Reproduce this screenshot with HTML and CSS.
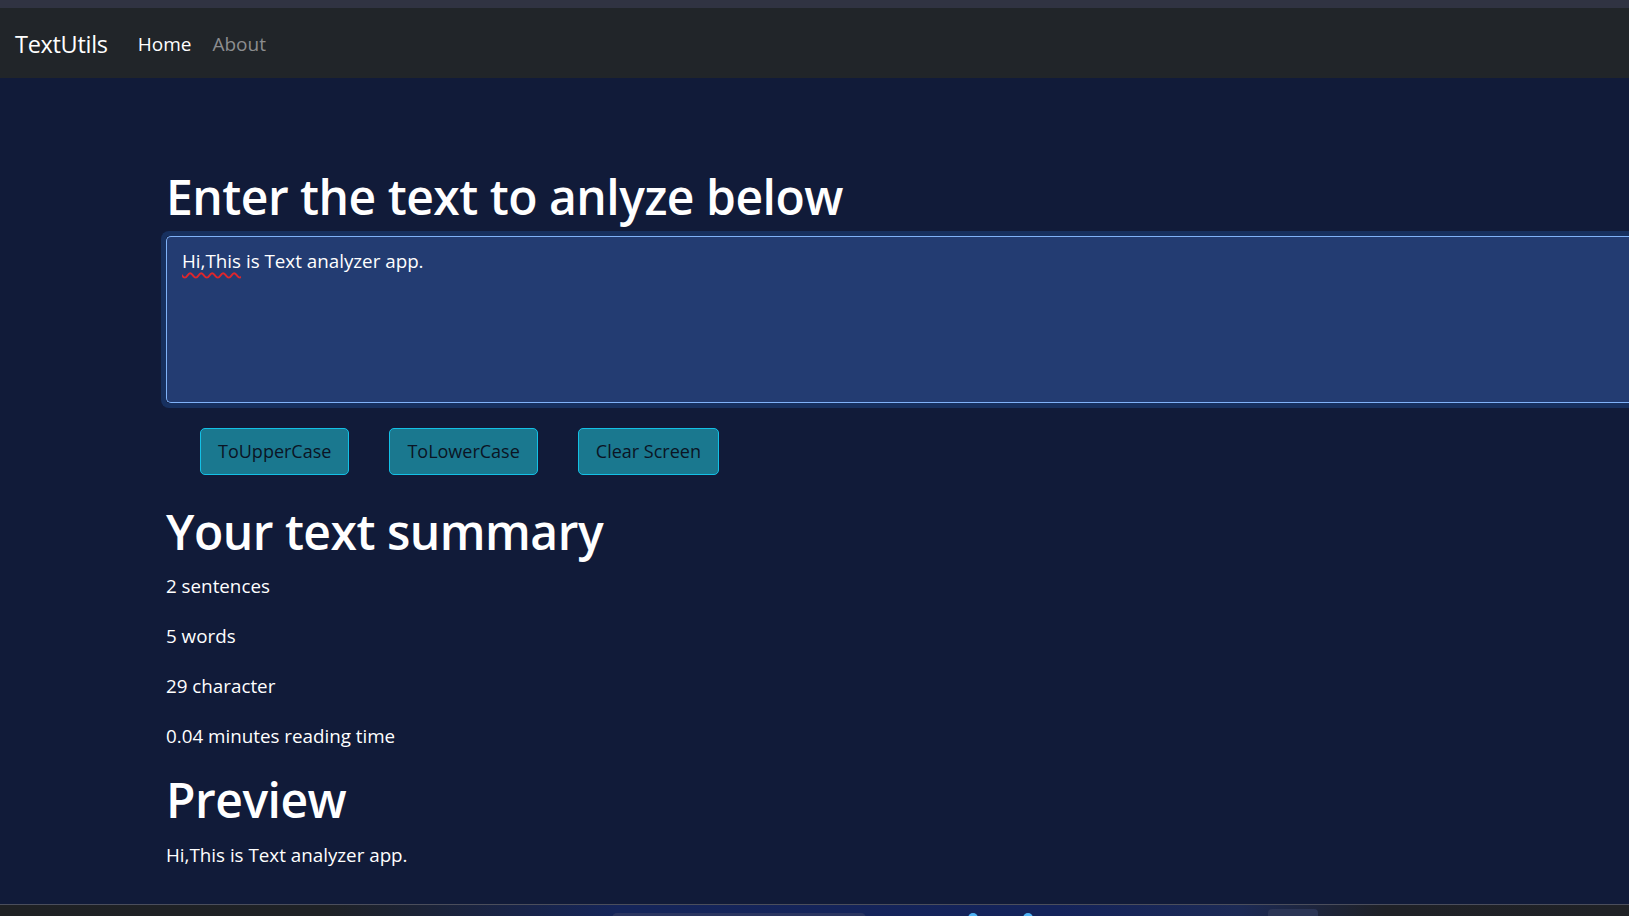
FILE: index.html
```html
<!DOCTYPE html>
<html lang="en">
<head>
<meta charset="utf-8">
<title>TextUtils</title>
<link rel="stylesheet" href="styles.css">
</head>
<body>
<div class="topstrip"></div>
<nav class="navbar">
  <a class="brand" href="#">TextUtils</a>
  <ul class="nav-links">
    <li><a class="nav-link active" href="#">Home</a></li>
    <li><a class="nav-link" href="#">About</a></li>
  </ul>
</nav>
<main class="container">
  <h1 class="title first">Enter the text to anlyze below</h1>
  <div class="textbox-wrap">
    <div class="textbox"><span class="misspelled">Hi,This</span> is Text analyzer app.</div>
  </div>
  <div class="buttons">
    <button class="btn">ToUpperCase</button>
    <button class="btn">ToLowerCase</button>
    <button class="btn">Clear Screen</button>
  </div>
  <h1 class="title">Your text summary</h1>
  <p class="line">2 sentences</p>
  <p class="line">5 words</p>
  <p class="line">29 character</p>
  <p class="line">0.04 minutes reading time</p>
  <h1 class="title">Preview</h1>
  <p class="line">Hi,This is Text analyzer app.</p>
</main>
<div class="taskbar">
  <div class="search-pill"></div>
  <span class="dot dot-a"></span>
  <span class="dot dot-b"></span>
  <div class="tray-pill"></div>
</div>
</body>
</html>
```

FILE: styles.css
```css
html, body {
  margin: 0;
  padding: 0;
  overflow: hidden;
  height: 100%;
}
body {
  background: #111b39;
  color: #ffffff;
  font-family: "Open Sans", "Noto Sans", sans-serif;
  font-size: 18.8px;
}
.topstrip {
  height: 8px;
  background: #303342;
}
.navbar {
  height: 70px;
  background: #212529;
  display: flex;
  align-items: center;
  padding-left: 15px;
  padding-top: 2px;
  box-sizing: border-box;
}
.brand {
  color: #ffffff;
  text-decoration: none;
  font-size: 23.5px;
  margin-right: 30px;
  letter-spacing: -0.3px;
}
.nav-links {
  list-style: none;
  display: flex;
  gap: 21px;
  margin: 0;
  padding: 0;
}
.nav-link {
  color: #8c8d8f;
  text-decoration: none;
  font-size: 19px;
}
.nav-link.active {
  color: #ffffff;
}
.container {
  padding-left: 166px;
  padding-top: 89px;
}
.title {
  font-size: 48px;
  font-weight: 600;
  line-height: 1.2;
  margin: 1px 0 11px 0;
  letter-spacing: -0.5px;
}
.title.first {
  margin-bottom: 5px;
}
.textbox-wrap {
  margin-left: -5px;
  border: 5px solid #17305f;
  border-right: none;
  border-radius: 8px 0 0 8px;
  width: 1600px;
}
.textbox {
  height: 149px;
  background: #233c72;
  border: 1px solid #80b2f8;
  border-right: none;
  border-radius: 5px 0 0 5px;
  padding: 9px 15px 7px 15px;
  font-size: 18.8px;
  line-height: 30px;
  color: #ffffff;
}
.misspelled {
  text-decoration: underline wavy #e0252b;
  text-decoration-thickness: 1.5px;
  text-underline-offset: 4px;
}
.buttons {
  display: flex;
  gap: 40px;
  padding-left: 34px;
  margin: 20px 0 28px 0;
}
.btn {
  height: 47px;
  padding: 0 17px;
  background: #1a788f;
  border: 1px solid #13c1e6;
  border-radius: 5px;
  color: #0b1424;
  font-family: "Open Sans", "Noto Sans", sans-serif;
  font-size: 18px;
  white-space: nowrap;
}
.line {
  margin: 0 0 20px 0;
  line-height: 30px;
  font-size: 18.8px;
}
.taskbar {
  position: fixed;
  left: 0;
  right: 0;
  bottom: 0;
  height: 11px;
  border-top: 1px solid #4b4e5c;
  background: linear-gradient(90deg, #1f2124 0%, #1f2226 20%, #15255a 38%, #14235a 65%, #1c2a55 76%, #1f2127 85%, #202226 100%);
}
.search-pill {
  position: absolute;
  left: 612px;
  top: 8px;
  width: 254px;
  height: 10px;
  border-radius: 5px;
  background: #2a3560;
}
.dot {
  position: absolute;
  top: 8px;
  width: 10px;
  height: 10px;
  border-radius: 50%;
  background: #4fb3f6;
}
.dot-a { left: 968px; }
.dot-b { left: 1023px; }
.tray-pill {
  position: absolute;
  left: 1268px;
  top: 4px;
  width: 50px;
  height: 14px;
  border-radius: 4px;
  background: #2b3555;
}
```
